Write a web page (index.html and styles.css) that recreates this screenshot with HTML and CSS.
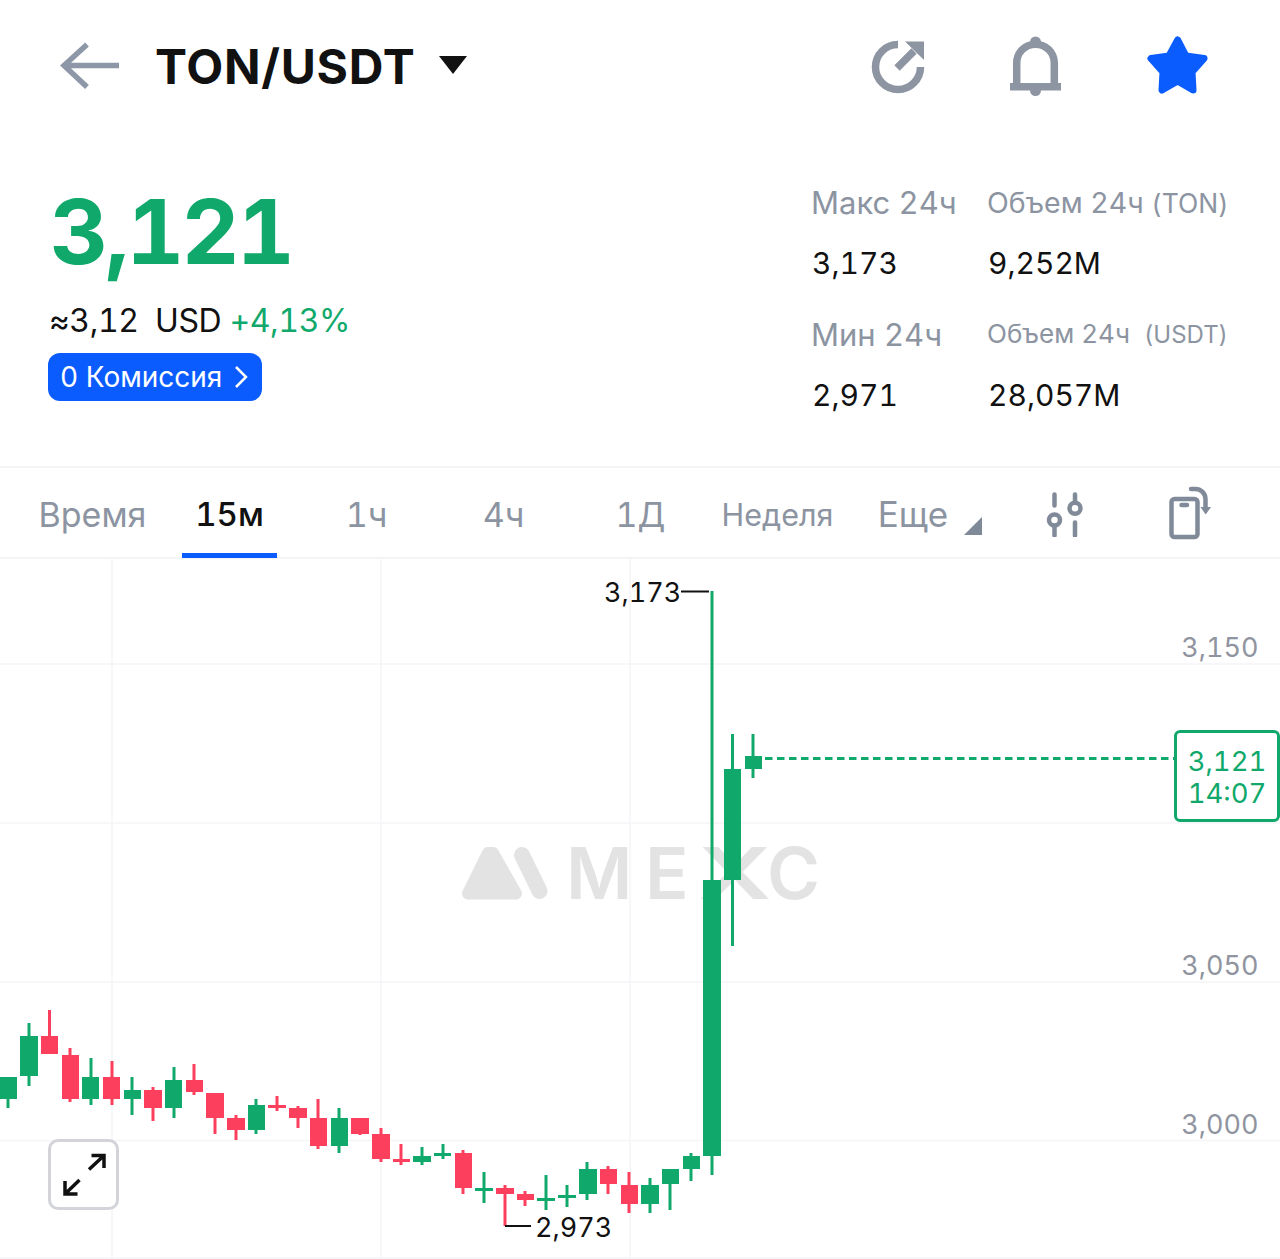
FILE: index.html
```html
<!DOCTYPE html>
<html lang="ru">
<head>
	<meta charset="UTF-8">
	<title>TON/USDT</title>
	<link rel="stylesheet" href="styles.css">
</head>
<body>

	<div class="header">
		<svg class="back" width="60" height="50" viewBox="60 41 60 50"><path d="M119 65.5H64M87 44.5L64 65.5L87 87"/></svg>
		<div class="pair">TON/USDT</div>
		<svg class="caret" width="30" height="20" viewBox="0 0 30 20"><path d="M1 1H29L15 19Z"/></svg>
		<div class="header-icons">
			<svg class="icon" width="56" height="56" viewBox="870 38 56 56">
				<path class="line" d="M898 44.5A22.5 22.5 0 1 0 920.5 67"/>
				<path class="line" d="M897 68L914 51"/>
				<path class="solid" d="M905 41.5H924V60Z"/>
			</svg>
			<svg class="icon" width="54" height="62" viewBox="1009 35 54 62">
				<path class="line" d="M1016.7 85V63A18.8 18.8 0 0 1 1054.3 63V85"/>
				<rect class="solid" x="1010" y="83" width="51" height="7.5"/>
				<circle class="solid" cx="1035.5" cy="42" r="5.5"/>
				<circle class="solid" cx="1035.5" cy="90.5" r="5.5"/>
			</svg>
			<svg class="star" width="64" height="60" viewBox="1145 36 64 60"><path d="M1176.7 40L1185 56L1203 58.5L1191 72L1192 90L1176.7 81L1161 90L1162 72L1150 58.5L1168 56Z"/></svg>
		</div>
	</div>

	<div class="stats">
		<div class="price-box">
			<div class="price">3,121</div>
			<div class="usd">≈3,12&nbsp; USD <span class="change">+4,13%</span></div>
			<div class="fee">0 Комиссия
				<svg width="14" height="24" viewBox="0 0 14 24"><path d="M2 2L12 12L2 22"/></svg>
			</div>
		</div>
		<div class="ticker">
			<div class="label">Макс 24ч</div>
			<div class="label vol">Объем 24ч <span>(TON)</span></div>
			<div class="value">3,173</div>
			<div class="value">9,252M</div>
			<div class="label low">Мин 24ч</div>
			<div class="label low small">Объем 24ч &nbsp;<span>(USDT)</span></div>
			<div class="value">2,971</div>
			<div class="value">28,057M</div>
		</div>
	</div>

	<div class="tabs">
		<div class="tab">Время</div>
		<div class="tab active">15м</div>
		<div class="tab">1ч</div>
		<div class="tab">4ч</div>
		<div class="tab">1Д</div>
		<div class="tab week">Неделя</div>
		<div class="tab more">Еще
			<svg class="corner" width="18" height="18" viewBox="0 0 18 18"><path d="M0 18H18V0Z"/></svg>
		</div>
		<svg class="tool" width="40" height="48" viewBox="1045 488.5 40 48">
			<path d="M1054.5 494V505M1054.5 527V535M1075 494V500M1075 522V535"/>
			<circle cx="1054.5" cy="519.5" r="5.5"/>
			<circle cx="1075" cy="507.7" r="5.5"/>
		</svg>
		<svg class="tool rotate" width="44" height="54" viewBox="1168 485.5 44 54">
			<rect x="1171.5" y="498.5" width="26" height="38" rx="3"/>
			<path d="M1181.5 504.5H1187M1191 488.5H1195A10 10 0 0 1 1205.5 498.5V507"/>
			<path class="tip" d="M1200.5 506.5H1211L1205.7 514Z"/>
		</svg>
	</div>

	<div class="chart">
		<svg class="plot" width="1280" height="700" viewBox="0 559 1280 700">
			<path class="grid" d="M0 664H1280M0 823H1280M0 982H1280M0 1140.500H1280M0 1258H1280M112 559V1259M381 559V1259M630 559V1259"/>

			<path class="mark" d="M468 893.500L488 853H493L516 893.500Z"/>
			<path class="mark-stripe" d="M522 855L539.500 891"/>
			<text class="mark-text" x="566 645" y="899">ME</text>
			<text class="mark-text" transform="translate(698 899) scale(1.42 1)">X</text>
			<text class="mark-text" x="767" y="899">C</text>

			<text class="axis" x="1258.500" y="657">3,150</text>
			<text class="axis" x="1258.500" y="975">3,050</text>
			<text class="axis" x="1258.500" y="1134">3,000</text>

			<g class="up">
				<line x1="8" y1="1077" x2="8" y2="1108"/><rect x="0" y="1077" width="17" height="22"/>
				<line x1="29" y1="1023" x2="29" y2="1086"/><rect x="20" y="1036" width="18" height="40"/>
				<line x1="91" y1="1058" x2="91" y2="1105"/><rect x="82" y="1077" width="17" height="22"/>
				<line x1="132" y1="1077" x2="132" y2="1115"/><rect x="124" y="1090" width="17" height="9"/>
				<line x1="174" y1="1067" x2="174" y2="1118"/><rect x="165" y="1080" width="17" height="28"/>
				<line x1="256" y1="1099" x2="256" y2="1134"/><rect x="248" y="1105" width="17" height="25"/>
				<line x1="339" y1="1108" x2="339" y2="1153"/><rect x="331" y="1118" width="17" height="28"/>
				<line x1="422" y1="1147" x2="422" y2="1165"/><rect x="413" y="1156" width="18" height="6"/>
				<line x1="443" y1="1144" x2="443" y2="1159"/><rect x="434" y="1153" width="17" height="3"/>
				<line x1="484" y1="1172" x2="484" y2="1203"/><rect x="475" y="1188" width="18" height="3"/>
				<line x1="546" y1="1175" x2="546" y2="1210"/><rect x="537" y="1198" width="18" height="3"/>
				<line x1="567" y1="1185" x2="567" y2="1207"/><rect x="558" y="1195" width="18" height="3"/>
				<line x1="587" y1="1162" x2="587" y2="1200"/><rect x="579" y="1169" width="18" height="25"/>
				<line x1="650" y1="1178" x2="650" y2="1213"/><rect x="641" y="1185" width="18" height="19"/>
				<line x1="670" y1="1169" x2="670" y2="1210"/><rect x="662" y="1169" width="17" height="15"/>
				<line x1="691" y1="1153" x2="691" y2="1181"/><rect x="683" y="1156" width="17" height="13"/>
				<line x1="712" y1="591" x2="712" y2="1175"/><rect x="703" y="880" width="18" height="276"/>
				<line x1="732.500" y1="734" x2="732.500" y2="946"/><rect x="724" y="769" width="17" height="111"/>
				<line x1="753" y1="734" x2="753" y2="778"/><rect x="745" y="756" width="17" height="13"/>
			</g>
			<g class="down">
				<line x1="49.500" y1="1010" x2="49.500" y2="1054"/><rect x="41" y="1036" width="17" height="18"/>
				<line x1="70" y1="1048" x2="70" y2="1102"/><rect x="62" y="1055" width="17" height="44"/>
				<line x1="112" y1="1061" x2="112" y2="1105"/><rect x="103" y="1077" width="17" height="22"/>
				<line x1="153" y1="1087" x2="153" y2="1121"/><rect x="144" y="1090" width="18" height="18"/>
				<line x1="194" y1="1064" x2="194" y2="1095"/><rect x="186" y="1080" width="17" height="12"/>
				<line x1="215" y1="1093" x2="215" y2="1134"/><rect x="206" y="1093" width="18" height="25"/>
				<line x1="236" y1="1115" x2="236" y2="1140"/><rect x="227" y="1118" width="18" height="12"/>
				<line x1="277" y1="1096" x2="277" y2="1111"/><rect x="268" y="1105" width="18" height="3"/>
				<line x1="298" y1="1106" x2="298" y2="1128"/><rect x="289" y="1108" width="18" height="10"/>
				<line x1="318" y1="1099" x2="318" y2="1149"/><rect x="310" y="1118" width="17" height="28"/>
				<line x1="360" y1="1118" x2="360" y2="1135"/><rect x="351" y="1118" width="18" height="16"/>
				<line x1="381" y1="1128" x2="381" y2="1162"/><rect x="372" y="1134" width="18" height="25"/>
				<line x1="401" y1="1144" x2="401" y2="1165"/><rect x="393" y="1159" width="17" height="3"/>
				<line x1="463" y1="1150" x2="463" y2="1194"/><rect x="455" y="1153" width="17" height="35"/>
				<line x1="505" y1="1185" x2="505" y2="1226"/><rect x="496" y="1188" width="18" height="6"/>
				<line x1="525" y1="1191" x2="525" y2="1206"/><rect x="517" y="1194" width="17" height="6"/>
				<line x1="608" y1="1166" x2="608" y2="1194"/><rect x="600" y="1169" width="17" height="15"/>
				<line x1="629" y1="1172" x2="629" y2="1213"/><rect x="621" y="1185" width="17" height="19"/>
			</g>

			<path class="last" d="M765 758.500H1175"/>
			<path class="leader" d="M681 591.500H709M505 1226H531"/>
			<text class="extreme" x="604" y="602">3,173</text>
			<text class="extreme" x="535" y="1237">2,973</text>
		</svg>

		<div class="tag">3,121<br>14:07</div>

		<div class="expand">
			<svg width="44" height="44" viewBox="0 0 44 44"><path d="M27 16.500L42 2.500M29.500 2.500H42V15M17.500 27L3 41M3 28V41H15.500"/></svg>
		</div>
	</div>

</body>
</html>
```

FILE: styles.css
```css
body {
	margin: 0;
	width: 1280px;
	height: 1259px;
	overflow: hidden;
	background-color: white;
	color: #111;
	font-family: 'Inter', 'Liberation Sans', sans-serif;
	font-variant-numeric: tabular-nums;
}
svg {
	display: block;
}
.header {
	display: flex;
	align-items: center;
	height: 132px;
	padding-left: 60px;
}
.back path {
	fill: none;
	stroke: #8d97a7;
	stroke-width: 5.5;
}
.pair {
	margin-left: 35px;
	font-size: 48px;
	font-weight: 700;
	letter-spacing: 0.75px;
}
.caret {
	margin: -2px 0 0 23px;
	fill: #111;
}
.header-icons {
	display: flex;
	align-items: center;
	margin-left: auto;
	padding-right: 70px;
	gap: 83px;
}
.icon .line {
	fill: none;
	stroke: #8d95a3;
	stroke-width: 7.5;
}
.icon .solid {
	fill: #8d95a3;
}
.star path {
	fill: #0b5cff;
	stroke: #0b5cff;
	stroke-width: 7;
	stroke-linejoin: round;
}
.stats {
	display: flex;
	justify-content: space-between;
	height: 336px;
	border-bottom: 2px solid #f4f4f6;
	box-sizing: border-box;
}
.price-box {
	padding: 45px 0 0 48px;
}
.price {
	margin-left: 2px;
	font-size: 90px;
	font-weight: 700;
	line-height: 110px;
	letter-spacing: -3px;
	color: #10a96b;
}
.usd {
	margin: 11px 0 0 1px;
	font-size: 32px;
	line-height: 46px;
	letter-spacing: -0.4px;
}
.change {
	color: #10a96b;
}
.fee {
	display: flex;
	align-items: center;
	gap: 12px;
	width: 214px;
	height: 48px;
	margin-top: 9px;
	padding-left: 12px;
	box-sizing: border-box;
	border-radius: 12px;
	background-color: #0b5cff;
	color: white;
	font-size: 28px;
}
.fee path {
	fill: none;
	stroke: white;
	stroke-width: 2.5;
}
.ticker {
	display: grid;
	grid-template-columns: 176px 292px;
	grid-template-rows: 60px 60px 72px 60px;
	padding-top: 41px;
	margin-left: auto;
}
.label {
	margin-left: -1px;
	font-size: 31px;
	line-height: 60px;
	color: #8c94a2;
}
.low {
	align-self: end;
}
.vol {
	font-size: 28.5px;
}
.vol span {
	font-size: 26.5px;
}
.small {
	font-size: 26px;
}
.small span {
	font-size: 24px;
}
.value {
	font-size: 30px;
	line-height: 60px;
}
.tabs {
	display: flex;
	align-items: center;
	height: 91px;
	padding-left: 24px;
	border-bottom: 2px solid #f4f4f6;
	box-sizing: border-box;
}
.tab {
	position: relative;
	width: 137px;
	height: 89px;
	text-align: center;
	line-height: 93px;
	font-size: 34px;
	color: #8c94a2;
}
.week {
	font-size: 30.5px;
}
.more {
	box-sizing: border-box;
	padding-right: 3px;
	font-size: 35px;
}
.active {
	color: #111;
	font-size: 33px;
	font-weight: 500;
}
.active::after {
	content: '';
	position: absolute;
	left: 21px;
	bottom: -1px;
	width: 95px;
	height: 5px;
	background-color: #0b5cff;
}
.corner {
	position: absolute;
	right: 1px;
	bottom: 22px;
	fill: #7f8a99;
}
.tool {
	margin-left: 62px;
	fill: none;
	stroke: #808a99;
	stroke-width: 4.5;
	stroke-linecap: round;
}
.rotate {
	margin-left: 83px;
}
.tool .tip {
	fill: #808a99;
	stroke: none;
}
.chart {
	position: relative;
	height: 700px;
}
.grid {
	fill: none;
	stroke: #f5f5f7;
	stroke-width: 1.5;
}
.mark {
	fill: #e3e3e3;
	stroke: #e3e3e3;
	stroke-width: 12;
	stroke-linejoin: round;
}
.mark-stripe {
	fill: none;
	stroke: #e3e3e3;
	stroke-width: 16;
	stroke-linecap: round;
}
.mark-text {
	font-size: 72px;
	font-weight: 600;
	fill: #e3e3e3;
}
.axis {
	font-size: 27px;
	text-anchor: end;
	fill: #8f949f;
}
.up line, .down line {
	stroke-width: 3;
}
.up rect {
	fill: #10a96b;
}
.up line {
	stroke: #10a96b;
}
.down rect {
	fill: #fb3f5d;
}
.down line {
	stroke: #fb3f5d;
}
.last {
	stroke: #10a96b;
	stroke-width: 3;
	stroke-dasharray: 7.500 4.500;
}
.leader {
	fill: none;
	stroke: #111;
	stroke-width: 2;
}
.extreme {
	font-size: 27px;
	fill: #111;
}
.tag {
	position: absolute;
	top: 171px;
	right: 0;
	width: 106px;
	height: 92px;
	box-sizing: border-box;
	padding-top: 12px;
	border: 3px solid #10a96b;
	border-radius: 6px;
	background-color: white;
	color: #10a96b;
	text-align: center;
	font-size: 27.5px;
	line-height: 32px;
}
.expand {
	position: absolute;
	top: 580px;
	left: 48px;
	display: flex;
	align-items: center;
	justify-content: center;
	width: 71px;
	height: 71px;
	box-sizing: border-box;
	border: 3px solid #d2d4da;
	border-radius: 10px;
	background-color: white;
}
.expand path {
	fill: none;
	stroke: #111;
	stroke-width: 3.5;
}
```
